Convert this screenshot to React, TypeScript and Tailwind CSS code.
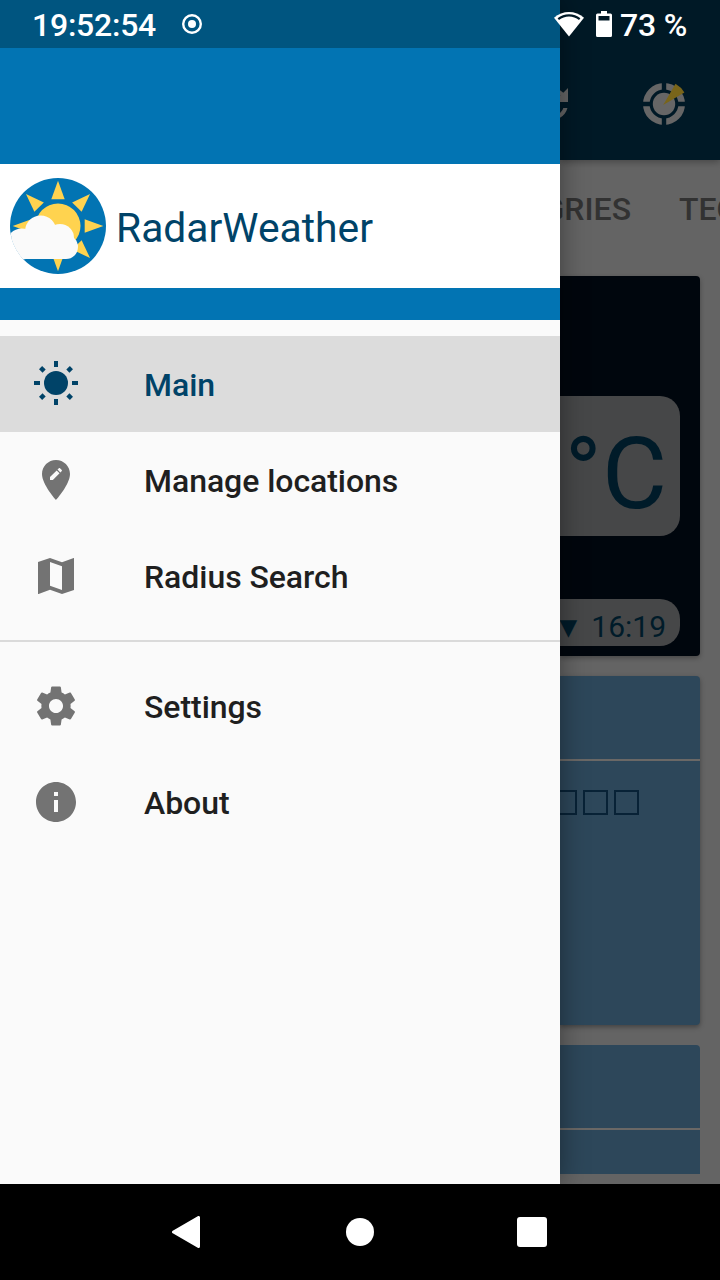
import React from 'react';

const menuIcons: Record<string, React.ReactNode> = {
  sun: (
    <g fill="currentColor">
      <circle cx="12" cy="11.5" r="6" />
      {[0, 90, 180, 270].map((a) => (
        <rect key={a} x="11" y="0.5" width="2" height="3" transform={`rotate(${a} 12 11.5)`} />
      ))}
      {[45, 135, 225, 315].map((a) => (
        <rect key={a} x="10.9" y="0.6" width="2.2" height="2.500" transform={`rotate(${a} 12 11.5)`} />
      ))}
    </g>
  ),
  pin: (
    <path
      fill="currentColor"
      d="M12 2C8.14 2 5 5.14 5 9c0 5.25 7 13 7 13s7-7.75 7-13c0-3.86-3.14-7-7-7zm-1.56 10H9v-1.44l3.35-3.34 1.43 1.43L10.44 12zm4.45-4.45l-.7.7-1.44-1.44.7-.7c.15-.15.39-.15.54 0l.9.9c.15.15.15.39 0 .54z"
    />
  ),
  map: (
    <path
      fill="currentColor"
      fillRule="evenodd"
      d="M20.85 3L15 5.1 9 3 3 5.05V21h.3L9 18.9l6 2.1 6-2.05V3zM15 19l-6-2.11V5l6 2.11z"
    />
  ),
  gear: (
    <path
      fill="currentColor"
      transform="translate(12 12) scale(.975) translate(-12 -12)"
      d="M19.43 12.98c.04-.32.07-.64.07-.98s-.03-.66-.07-.98l2.11-1.65c.19-.15.24-.42.12-.64l-2-3.46c-.12-.22-.39-.3-.61-.22l-2.49 1c-.52-.4-1.08-.73-1.69-.98l-.38-2.65C14.46 2.18 14.25 2 14 2h-4c-.25 0-.46.18-.49.42l-.38 2.65c-.61.25-1.17.59-1.69.98l-2.49-1c-.23-.09-.49 0-.61.22l-2 3.46c-.13.22-.07.49.12.64l2.11 1.65c-.04.32-.07.65-.07.98s.03.66.07.98l-2.11 1.65c-.19.15-.24.42-.12.64l2 3.46c.12.22.39.3.61.22l2.49-1c.52.4 1.08.73 1.69.98l.38 2.65c.03.24.24.42.49.42h4c.25 0 .46-.18.49-.42l.38-2.65c.61-.25 1.17-.59 1.69-.98l2.49 1c.23.09.49 0 .61-.22l2-3.46c.12-.22.07-.49-.12-.64l-2.11-1.65zM12 15.6c-1.98 0-3.6-1.62-3.6-3.6s1.62-3.6 3.6-3.6 3.6 1.62 3.6 3.6-1.62 3.6-3.6 3.6z"
    />
  ),
  info: (
    <path
      fill="currentColor"
      d="M12 2C6.48 2 2 6.48 2 12s4.48 10 10 10 10-4.48 10-10S17.52 2 12 2zm1 15h-2v-6h2v6zm0-8h-2V7h2v2z"
    />
  ),
};

function MenuItem({ icon, label, active = false }: { icon: string; label: string; active?: boolean }) {
  return (
    <li
      className={`flex h-24 items-center gap-16 pl-8 ${
        active ? 'bg-[#dcdcdc] text-[#004368]' : 'text-[#737373]'
      }`}
    >
      <svg className="size-12 shrink-0" viewBox="0 0 24 24">
        {menuIcons[icon]}
      </svg>
      <span
        className={`pt-0.5 text-[32px] leading-10 font-medium tracking-[-0.05px] whitespace-nowrap ${
          active ? 'text-[#004368]' : 'text-[#1f1f1f]'
        }`}
      >
        {label}
      </span>
    </li>
  );
}

function Logo() {
  return (
    <svg className="size-24 shrink-0" viewBox="0 0 96 96">
      <defs>
        <clipPath id="disc">
          <circle cx="48" cy="48" r="48" />
        </clipPath>
      </defs>
      <circle cx="48" cy="48" r="48" fill="#0274b3" />
      <g fill="#ffd34f">
        {[0, 45, 90, 135, 180, 225, 270, 315].map((a) => (
          <path key={a} d="M48 2.7L54.7 21.3H41.3z" transform={`rotate(${a} 48 48)`} />
        ))}
      </g>
      <circle cx="48" cy="48" r="22.5" fill="#ffd34f" />
      <g fill="#fafafa" clipPath="url(#disc)">
        <circle cx="30.7" cy="53" r="15.6" />
        <circle cx="50" cy="60" r="14" />
        <circle cx="56" cy="69" r="12" />
        <circle cx="11.7" cy="66" r="15.4" />
        <path d="M11 55h40l5 14v12H0V60z" />
      </g>
    </svg>
  );
}

function Drawer() {
  return (
    <nav className="relative z-10 flex w-[560px] shrink-0 flex-col bg-[#fafafa] shadow-[0_0_26px_rgba(0,0,0,0.4)]">
      <header className="flex h-80 flex-col bg-[#0274b3]">
        <div className="h-12 bg-[#005580]" />
        <div className="mt-[116px] flex h-[124px] items-center gap-2.5 bg-white pl-2.5">
          <Logo />
          <h1 className="pt-1 text-[40.8px] leading-[50px] text-[#004368]">RadarWeather</h1>
        </div>
      </header>
      <ul className="pt-4 pb-4">
        <MenuItem icon="sun" label="Main" active />
        <MenuItem icon="pin" label="Manage locations" />
        <MenuItem icon="map" label="Radius Search" />
      </ul>
      <ul className="border-t-2 border-[#dadada] pt-4">
        <MenuItem icon="gear" label="Settings" />
        <MenuItem icon="info" label="About" />
      </ul>
    </nav>
  );
}

function DimmedPage() {
  return (
    <main className="flex w-40 flex-col overflow-hidden bg-[#646464]">
      <div className="flex h-40 shrink-0 items-end bg-[#001926] pb-8 shadow-[0_2px_7px_rgba(0,0,0,0.3)]">
        <svg className="-ml-8 size-12 shrink-0" viewBox="0 0 24 24">
          <path
            fill="#666"
            d="M17.65 6.35C16.2 4.9 14.21 4 12 4c-4.42 0-7.99 3.58-7.99 8s3.57 8 7.99 8c3.73 0 6.84-2.55 7.73-6h-2.08c-.82 2.33-3.04 4-5.65 4-3.31 0-6-2.69-6-6s2.69-6 6-6c1.66 0 3.14.69 4.22 1.78L13 11h7V4l-2.35 2.35z"
          />
        </svg>
        <svg className="ml-16 size-12 shrink-0" viewBox="0 0 48 48">
          <circle cx="24" cy="24" r="17.7" fill="none" stroke="#666" strokeWidth="6.6" />
          <path d="M24 2v14M24 32v14M2 24h14M32 24h14" stroke="#001926" strokeWidth="4.4" />
          <circle cx="24" cy="24" r="11.2" fill="#666" />
          <path d="M23.2 25L35.5 3.8Q41 7 44.4 12.400z" fill="#79651a" />
        </svg>
      </div>
      <div className="flex h-24 shrink-0 items-center pt-0.5 text-[32px] font-medium text-[#323232]">
        <span className="flex w-[71px] shrink-0 justify-end">GRIES</span>
        <span className="ml-12 shrink-0">TEC</span>
      </div>
      <div className="flex flex-1 flex-col gap-5 overflow-hidden pt-5 pr-5">
        <section className="flex h-[380px] shrink-0 flex-col rounded-r bg-[#00060d] pt-[120px] pr-5 pb-2.5 text-[#001b29] shadow-[0_2px_5px_rgba(0,0,0,0.3)]">
          <div className="flex h-[140px] items-center justify-end rounded-r-[20px] bg-[#464748] pt-4 pr-[13px] text-[100px] leading-none">
            °C
          </div>
          <div className="mt-auto flex h-[47px] items-center justify-end rounded-r-[20px] bg-[#464748] pt-2 pr-[14px] text-[30px]">
            <span className="mr-3.5 pt-0.5 font-['DejaVu_Sans'] text-[23px]">▼</span>
            <span>16:19</span>
          </div>
        </section>
        <section className="flex h-[349px] shrink-0 flex-col rounded-r bg-[#2d475a] shadow-[0_2px_5px_rgba(0,0,0,0.35)]">
          <div className="h-[85px] border-b-2 border-[#6a6866]" />
          <div className="-ml-2 flex gap-1.5 pt-[29px]">
            <i className="size-[25px] border-2 border-[#082236]" />
            <i className="size-[25px] border-2 border-[#082236]" />
            <i className="size-[25px] border-2 border-[#082236]" />
          </div>
        </section>
        <section className="h-[129px] shrink-0 rounded-tr bg-[#2d475a]">
          <div className="h-[85px] border-b-2 border-[#6a6866]" />
        </section>
      </div>
    </main>
  );
}

function StatusBar() {
  return (
    <div className="absolute inset-x-0 top-0 z-20 flex h-12 items-center pr-[33px] pl-8 text-[32px] leading-none font-medium text-white">
      <span className="w-[149px] pt-0.5 tracking-[-0.25px]">19:52:54</span>
      <svg className="size-[22px]" viewBox="0 0 22 22">
        <circle cx="11" cy="11" r="8.800" fill="none" stroke="#fff" strokeWidth="2.4" />
        <circle cx="11" cy="11" r="4" fill="#fff" />
      </svg>
      <svg className="ml-auto h-[26px] w-[30px]" viewBox="0 0 30 26">
        <path fill="#fff" d="M15 25.5L0 6.8C8.5-1 21.5-1 30 6.8z" />
        <path fill="none" stroke="#001926" strokeWidth="2.2" d="M4.3 8.2C10.5 3.2 19.5 3.2 25.7 8.2" />
      </svg>
      <svg className="ml-3 h-[26px] w-4" viewBox="0 0 16 26">
        <path
          fill="#fff"
          fillRule="evenodd"
          d="M5 0h6v2.500h3.500A1.500 1.500 0 0116 4v20.500a1.500 1.500 0 01-1.500 1.500h-13A1.500 1.500 0 010 24.500V4A1.500 1.500 0 011.500 2.500H5zM2.500 5v4.500h11V5z"
        />
      </svg>
      <span className="ml-2 pt-0.5 tracking-[-0.25px]">73 %</span>
    </div>
  );
}

export default function App() {
  return (
    <div className="relative flex h-[1280px] w-[720px] flex-col overflow-hidden bg-black font-['Roboto',sans-serif]">
      <StatusBar />
      <div className="flex h-[1184px] overflow-hidden">
        <Drawer />
        <DimmedPage />
      </div>
      <footer className="flex h-24 items-center">
        <svg className="ml-[172px] h-8 w-7" viewBox="0 0 28 32">
          <path d="M1.500 16L26.500 1.500v29z" fill="#fff" stroke="#fff" strokeWidth="3" strokeLinejoin="round" />
        </svg>
        <div className="ml-[146px] size-7 rounded-full bg-white" />
        <div className="ml-[143px] size-[30px] rounded-[3px] bg-white" />
      </footer>
    </div>
  );
}
